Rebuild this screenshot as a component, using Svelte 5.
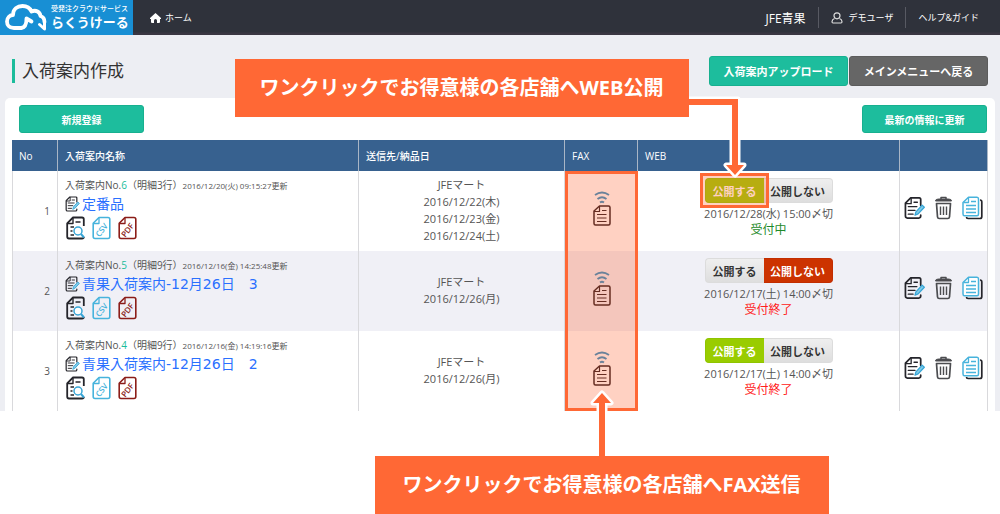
<script>
  let rows = $state([
    {
      no: 1,
      id: 6,
      lines: 3,
      updated: "2016/12/20(火) 09:15:27",
      name: "定番品",
      dates: ["2016/12/22(木)", "2016/12/23(金)", "2016/12/24(土)"],
      published: true,
      deadline: "2016/12/28(水) 15:00",
      open: true,
    },
    {
      no: 2,
      id: 5,
      lines: 9,
      updated: "2016/12/16(金) 14:25:48",
      name: "青果入荷案内-12月26日　3",
      dates: ["2016/12/26(月)"],
      published: false,
      deadline: "2016/12/17(土) 14:00",
      open: false,
    },
    {
      no: 3,
      id: 4,
      lines: 9,
      updated: "2016/12/16(金) 14:19:16",
      name: "青果入荷案内-12月26日　2",
      dates: ["2016/12/26(月)"],
      published: true,
      deadline: "2016/12/17(土) 14:00",
      open: false,
    },
  ]);
</script>

{#snippet editIcon()}
  <svg viewBox="0 0 22 24" fill="none" stroke-linejoin="round" stroke-linecap="round">
    <path d="M17.5 9V3Q17.5 1.5 16 1.5H7L1.5 7V20.5Q1.5 22.5 3.5 22.5H15.5Q17.5 22.5 17.5 20.5V19.5" stroke="#25252b" stroke-width="1.8" />
    <path d="M7.5 2V7.5H2M10.5 6H14M4.5 10.5H13.5M4.5 14.5H11.5M4.5 18.5H9.5" stroke="#25252b" stroke-width="1.4" />
    <path d="M11.5 19.5L12.5 16L19 9L21.3 11.2L14.8 18.2Z" fill="#7fcbe8" stroke="#36a5d6" stroke-width="1.3" />
  </svg>
{/snippet}

{#snippet fileIcon(color, label)}
  <svg viewBox="0 0 19 24" fill="none" stroke={color} stroke-linejoin="round">
    <path d="M7 1.5H16Q17.8 1.5 17.8 3.3V20.5Q17.8 22.5 16 22.5H3Q1.2 22.5 1.2 20.5V7.3Z" stroke-width="1.6" />
    <path d="M7 2V7.5H1.5" stroke-width="1.3" />
    <text x="9.5" y="17" transform="rotate(-52 9.5 14)" text-anchor="middle" font-size="8" font-weight="600" fill={color} stroke="none">{label}</text>
  </svg>
{/snippet}

<div class="screen">
  <div class="page">
    <header>
      <a class="logo" href="#top">
        <svg viewBox="0 0 42 28" fill="none" stroke="#fff" stroke-width="3.8" stroke-linecap="round" stroke-linejoin="round">
          <path d="M16 24H9C4 24 2 20.5 2 17.5C2 13.500 5 11 8 11C8 5 12.5 2 17.5 2C22 2 25 4 26.5 7.5C31 5.500 35 8 35.5 12C38.5 13 39.5 15.5 39.5 18" />
          <path d="M16 24C20 24 21.500 21 21.500 14.500L26.500 17.500" />
          <path d="M39.5 17V25L34.5 20.5" stroke-width="3" />
        </svg>
        <span class="logo-text"><small>受発注クラウドサービス</small><b>らくうけーる</b></span>
      </a>
      <a class="home" href="#home">
        <svg viewBox="0 0 11 10" fill="#fff"><path d="M5.5 0L0 5V6H1V9Q1 10 2 10H4V7.5Q4 6 5.5 6T7 7.5V10H9Q10 10 10 9V6H11V5Z" /></svg>
        ホーム
      </a>
      <nav>
        <span class="company">JFE青果</span>
        <a href="#user">
          <svg viewBox="0 0 12 12" fill="none" stroke="#ddd" stroke-width="1.2"><circle cx="6" cy="3.8" r="3" /><path d="M3.5 6.5Q1 7.5 1 9.800Q1 11 2 11H10Q11 11 11 9.800Q11 7.5 8.5 6.5" /></svg>
          デモユーザ
        </a>
        <a href="#help">ヘルプ&amp;ガイド</a>
      </nav>
    </header>

    <div class="heading">
      <h1>入荷案内作成</h1>
      <button class="large">入荷案内アップロード</button>
      <button class="large gray">メインメニューへ戻る</button>
    </div>

    <main>
      <div class="toolbar">
        <button>新規登録</button>
        <button>最新の情報に更新</button>
      </div>

      <table>
        <thead>
          <tr>
            <th class="col-no">No</th>
            <th class="col-name">入荷案内名称</th>
            <th class="col-dest">送信先/納品日</th>
            <th class="col-fax">FAX</th>
            <th>WEB</th>
            <th class="col-actions" aria-label="操作"></th>
          </tr>
        </thead>
        <tbody>
          {#each rows as row, i}
            <tr>
              <td class="no">{row.no}</td>
              <td class="name">
                <div class="meta">
                  入荷案内No.<em>{row.id}</em>（明細{row.lines}行）<small>{row.updated}更新</small>
                </div>
                <a class="title" href="#edit-{row.id}">{@render editIcon()}{row.name}</a>
                <div class="files">
                  <button class="icon" aria-label="プレビュー">
                    <svg viewBox="0 0 19 24" fill="none" stroke="#25252b" stroke-linejoin="round">
                      <path d="M17.8 10V3.3Q17.8 1.5 16 1.5H7L1.2 7.3V20.5Q1.2 22.5 3 22.5H16Q17.8 22.5 17.8 21" stroke-width="1.8" />
                      <path d="M7 2V7.5H1.5M9.5 6H14.5M4.5 11H8M4.5 15H6.5M4.5 19H8" stroke-width="1.4" />
                      <circle cx="12" cy="15" r="4" fill="#fff" stroke="#36a5d6" stroke-width="1.5" />
                      <path d="M15 18L18 21.5" stroke="#36a5d6" stroke-width="2" />
                    </svg>
                  </button>
                  <button class="icon" aria-label="CSV">{@render fileIcon("#47b3dc", "CSV")}</button>
                  <button class="icon" aria-label="PDF">{@render fileIcon("#8b1d18", "PDF")}</button>
                </div>
              </td>
              <td class="dest">
                <div>JFEマート</div>
                {#each row.dates as date}
                  <div>{date}</div>
                {/each}
              </td>
              <td class="fax">
                <button class="icon" aria-label="FAX送信">
                  <svg viewBox="0 0 18 36" fill="none" stroke-linejoin="round">
                    <path d="M2 4Q9 -1 16 4M4.5 8Q9 4.5 13.5 8M7 11.5Q9 10 11 11.5" stroke="#2b8fc6" stroke-width="1.8" />
                    <path d="M6.5 15H15.5Q17 15 17 16.5V32.5Q17 34 15.5 34H2.5Q1 34 1 32.5V20Z" stroke="#25151a" stroke-width="1.5" />
                    <path d="M6.5 15V20.5H1M9 19.5H13.5M4 23.5H13.5M4 27H13.5M4 30.5H13.5" stroke="#25151a" stroke-width="1.2" />
                  </svg>
                </button>
                {#if i === 0}
                  <div class="marker fax-marker">
                    <svg class="arrow" viewBox="0 0 24 67"><path d="M9 67V14H3L12 4L21 14H15V67Z" /></svg>
                    <div class="callout">ワンクリックでお得意様の各店舗へFAX送信</div>
                  </div>
                {/if}
              </td>
              <td class="web">
                <div class="switch">
                  <button class:on={row.published} onclick={() => (row.published = true)}>公開する</button>
                  <button class:off={!row.published} onclick={() => (row.published = false)}>公開しない</button>
                  {#if i === 0}
                    <div class="marker web-marker">
                      <svg class="arrow" viewBox="0 0 60 86"><path d="M0 6H49V72H55L46 82L37 72H43V12H0Z" /></svg>
                      <div class="callout">ワンクリックでお得意様の各店舗へWEB公開</div>
                    </div>
                  {/if}
                </div>
                <div class="deadline">{row.deadline}〆切</div>
                <div class="status" class:open={row.open}>{row.open ? "受付中" : "受付終了"}</div>
              </td>
              <td>
                <div class="actions">
                  <button class="icon" aria-label="編集">{@render editIcon()}</button>
                  <button class="icon" aria-label="削除">
                    <svg viewBox="0 0 18 24" fill="none" stroke="#4c4d50" stroke-linejoin="round">
                      <path d="M1 5Q1 3 4 3H14Q17 3 17 5Z" fill="#4c4d50" />
                      <path d="M6.5 3V1.5H11.5V3" stroke-width="1.5" />
                      <path d="M2 7.5L3 21Q3.2 22.5 4.7 22.5H13.3Q14.8 22.5 15 21L16 7.5Z" stroke-width="1.7" />
                      <path d="M6 10.5V19M9 10.5V19M12 10.5V19" stroke-width="1.4" />
                    </svg>
                  </button>
                  <button class="icon" aria-label="複製">
                    <svg viewBox="0 0 21 24" fill="none" stroke-linejoin="round">
                      <path d="M18 4Q19.8 4 19.8 6V20.5Q19.8 22.5 18 22.5H6Q4.5 22.5 4.5 21" stroke="#25252b" stroke-width="1.7" />
                      <path d="M6.5 1.2H15Q16.5 1.2 16.5 3V18Q16.5 19.8 15 19.8H2.500Q1 19.8 1 18V6.5Z" fill="#fff" stroke="#47b3dc" stroke-width="1.5" />
                      <path d="M6.5 1.5V6.5H1.5M9 5.5H14M4 9.5H14M4 13H14M4 16.5H14" stroke="#47b3dc" stroke-width="1.3" />
                    </svg>
                  </button>
                </div>
              </td>
            </tr>
          {/each}
        </tbody>
      </table>
    </main>
  </div>
</div>

<style>
  :global(body) {
    margin: 0;
    background: #fff;
  }

  /* leaves room for the callout below the table */
  .screen {
    padding-bottom: 103px;
  }

  .page {
    font-family: "Open Sans", "Noto Sans CJK JP", sans-serif;
    font-size: 11px;
    color: #555;
    background: #edeef3;
  }

  svg {
    display: block;
    flex: none;
  }

  a {
    text-decoration: none;
  }

  header {
    display: flex;
    align-items: center;
    height: 35px;
    color: #fff;
    background: linear-gradient(#2f323b 32px, #3a3642 33px);
    font-size: 9px;
  }

  header a {
    color: #fff;
  }

  .logo {
    display: flex;
    align-items: center;
    gap: 4px;
    box-sizing: border-box;
    width: 133px;
    height: 35px;
    padding-left: 5px;
    background: #188fd4;
  }

  .logo svg {
    width: 42px;
    height: 28px;
  }

  .logo-text small {
    display: block;
    font-size: 7px;
    font-weight: 500;
    line-height: 9px;
    white-space: nowrap;
  }

  .logo-text b {
    display: block;
    font-size: 13px;
    font-weight: 700;
    line-height: 18px;
    white-space: nowrap;
  }

  .home {
    display: flex;
    align-items: center;
    gap: 4px;
    margin-left: 17px;
  }

  .home svg {
    width: 11px;
    height: 10px;
  }

  nav {
    display: flex;
    align-items: center;
    margin-left: auto;
    margin-right: 9px;
  }

  nav > * {
    display: flex;
    align-items: center;
    gap: 6px;
    height: 21px;
    padding: 0 12px;
  }

  nav > a {
    border-left: 1px solid #585a63;
  }

  nav svg {
    width: 12px;
    height: 12px;
  }

  .company {
    font-size: 12px;
  }

  .heading {
    display: flex;
    align-items: center;
    gap: 1px;
    padding: 21px 12px 12px;
  }

  h1 {
    margin: 0 auto 0 0;
    padding-left: 7px;
    border-left: 3px solid #1bbc9b;
    font-size: 17px;
    font-weight: 400;
    line-height: 24px;
    color: #333;
  }

  button {
    font-family: inherit;
    cursor: pointer;
  }

  .heading button,
  .toolbar button {
    width: 125px;
    height: 28px;
    padding: 0;
    border: 1px solid #17b08f;
    border-radius: 3px;
    background: #1dbd9d;
    color: #fff;
    font-size: 10px;
    font-weight: 700;
  }

  .heading button.large {
    width: 139px;
    height: 30px;
    font-size: 11px;
  }

  .heading button.gray {
    border-color: #5c5c5c;
    background: #666;
  }

  main {
    margin: 0 5px;
    padding: 7px 7px 0;
    border-radius: 5px 5px 0 0;
    background: #fff;
  }

  .toolbar {
    display: flex;
    justify-content: space-between;
    padding: 0 1px 7px 7px;
  }

  table {
    width: 100%;
    table-layout: fixed;
    border-collapse: separate;
    border-spacing: 0;
  }

  th {
    box-sizing: border-box;
    height: 31px;
    padding: 0 7px;
    border-right: 1px solid #a9b6c6;
    background: #37618f;
    color: #fff;
    font-size: 10px;
    font-weight: 500;
    text-align: left;
  }

  .col-no {
    width: 46px;
  }

  .col-name {
    width: 301px;
  }

  .col-dest {
    width: 206px;
  }

  .col-fax {
    width: 73px;
  }

  .col-actions {
    width: 88px;
  }

  td {
    box-sizing: border-box;
    height: 80px;
    padding: 0 7px;
    border-right: 1px solid #d9d9dc;
  }

  td:first-child {
    border-left: 1px solid #d9d9dc;
  }

  tbody tr:nth-child(even) {
    background: #f0f0f6;
  }

  .no {
    font-size: 10px;
    text-align: right;
  }

  .name {
    padding-top: 7px;
    vertical-align: top;
  }

  .meta {
    font-size: 10px;
    line-height: 14px;
    white-space: nowrap;
  }

  .meta em {
    font-style: normal;
    color: #1bbc9b;
  }

  .meta small {
    font-size: 8px;
  }

  .title {
    display: flex;
    align-items: center;
    gap: 2px;
    margin: 1px 0 2px;
    font-family: "DejaVu Sans", "Noto Sans CJK JP", sans-serif;
    font-size: 14px;
    line-height: 20px;
    color: #2a70ff;
  }

  .title svg {
    width: 15px;
    height: 16px;
  }

  .files {
    display: flex;
    gap: 7px;
    padding-left: 1px;
  }

  .icon {
    padding: 0;
    border: 0;
    background: none;
  }

  .files svg {
    width: 19px;
    height: 24px;
  }

  .dest {
    padding-bottom: 2px;
    line-height: 17px;
    text-align: center;
  }

  .fax {
    position: relative;
    padding-bottom: 5px;
    border-right-width: 0;
  }

  .fax .icon {
    display: block;
    margin: 0 auto;
  }

  .fax .icon svg {
    width: 18px;
    height: 36px;
  }

  .web {
    padding-top: 7px;
    text-align: center;
    vertical-align: top;
  }

  .switch {
    position: relative;
    display: inline-flex;
    height: 25px;
    margin-bottom: 3px;
    vertical-align: top;
  }

  .switch button {
    padding: 0;
    border: 1px solid #dcdcdc;
    background: linear-gradient(#efefef, #dedede);
    color: #333;
    font-size: 11px;
    font-weight: 700;
    white-space: nowrap;
  }

  .switch button:nth-child(1) {
    width: 59px;
    border-right: 0;
    border-radius: 4px 0 0 4px;
  }

  .switch button:nth-child(2) {
    width: 69px;
    border-left: 0;
    border-radius: 0 4px 4px 0;
  }

  .switch button.on {
    border-color: #8fc400;
    background: #9c0;
    color: #fff;
  }

  .switch button.off {
    border-color: #c22d00;
    background: #c30;
    color: #fff;
  }

  .deadline {
    line-height: 16px;
  }

  .status {
    font-size: 12px;
    line-height: 16px;
    color: #ff2020;
  }

  .status.open {
    color: #1e8a2a;
  }

  .actions {
    display: flex;
    justify-content: space-between;
    padding-bottom: 6px;
    margin: 0 -3px;
  }

  .actions svg {
    width: 21px;
    height: 24px;
  }

  /* guide overlays drawn over the table */
  .marker {
    position: absolute;
    z-index: 1;
    box-sizing: border-box;
    border: 3px solid #ff6835;
    background: rgba(255, 104, 53, 0.3);
    pointer-events: none;
  }

  .fax-marker {
    top: 0;
    left: 0;
    width: 100%;
    height: 300%;
  }

  .web-marker {
    top: -5px;
    left: -5px;
    width: 69px;
    height: 35px;
  }

  .callout {
    position: absolute;
    width: 454px;
    background: #ff6835;
    color: #fff;
    font-size: 20px;
    font-weight: 700;
    line-height: 58px;
    text-align: center;
    white-space: nowrap;
  }

  .arrow {
    position: absolute;
  }

  .arrow path {
    fill: #ff6835;
    stroke: #fff;
    stroke-width: 5px;
    stroke-linejoin: round;
    paint-order: stroke;
  }

  .fax-marker .callout {
    top: calc(100% + 48px);
    left: 50%;
    transform: translateX(-50%);
  }

  .fax-marker .arrow {
    top: calc(100% - 19px);
    left: calc(50% - 12px);
    width: 24px;
    height: 67px;
  }

  .web-marker .callout {
    right: 77px;
    bottom: 88px;
  }

  .web-marker .arrow {
    left: -14px;
    bottom: 26px;
    width: 60px;
    height: 86px;
  }
</style>
